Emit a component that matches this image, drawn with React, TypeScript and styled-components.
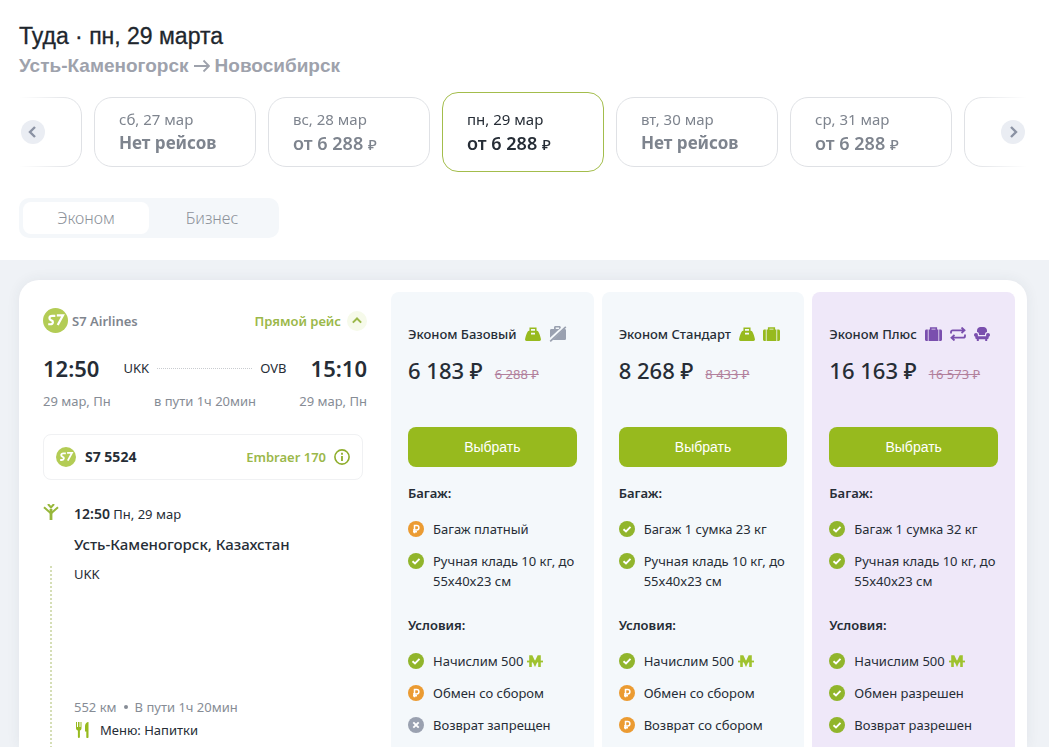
import React, { useState } from "react";
import styled, { createGlobalStyle, css } from "styled-components";

const green = "#97ba1e";
const greenText = "#9bb84a";
const dark = "#262d36";
const muted = "#868c95";
const violet = "#7a4fae";
const orange = "#eb9b32";
const grey = "#9aa1b0";

const GlobalStyle = createGlobalStyle`
  *, *::before, *::after { box-sizing: border-box; }
  body {
    margin: 0;
    background: #eff2f6;
    color: ${dark};
    font-family: "Noto Sans", "Open Sans", sans-serif;
    font-size: 13px;
    line-height: 20px;
  }
  h1, h2, h3, p, ul { margin: 0; padding: 0; font-size: inherit; font-weight: inherit; }
  ul { list-style: none; }
  button { margin: 0; padding: 0; border: 0; background: none; font: inherit; color: inherit; cursor: pointer; }
  svg { display: block; flex: none; }
`;

const Page = styled.div`
  display: flex;
  flex-direction: column;
  min-height: 100vh;
`;

const Top = styled.header`
  padding: 20px 22px 22px 19px;
  background: #fff;
`;

const Title = styled.h1`
  font-family: "Liberation Sans", Arial, sans-serif;
  font-size: 23px;
  line-height: 32px;
  color: #20262d;
  -webkit-text-stroke: 0.3px currentColor;
`;

const Route = styled.p`
  display: flex;
  align-items: center;
  gap: 5px;
  font-family: "Liberation Sans", Arial, sans-serif;
  font-size: 19px;
  font-weight: 700;
  line-height: 28px;
  color: #9ea2ac;
`;

const Dates = styled.nav`
  position: relative;
  margin-top: 12px;
`;

const Strip = styled.div`
  display: flex;
  align-items: center;
  justify-content: center;
  gap: 12px;
  overflow: hidden;
  mask-image: linear-gradient(90deg, transparent, #000 56px, #000 calc(100% - 56px), transparent);
`;

const DateCard = styled.button<{ $active?: boolean }>`
  flex: none;
  width: 162px;
  height: 70px;
  padding: 0 24px;
  border: 1px solid #dfe1e5;
  border-radius: 18px;
  background: #fff;
  text-align: left;
  color: #7e848e;
  ${(p) =>
    p.$active &&
    css`
      height: 80px;
      border-color: #a3bd4c;
      border-radius: 16px;
      color: ${dark};
    `}
`;

const DateLabel = styled.span`
  display: block;
  font-size: 15px;
  line-height: 22px;
`;

const DatePrice = styled.span<{ $none?: boolean }>`
  display: block;
  font-size: ${(p) => (p.$none ? "17px" : "18px")};
  font-weight: ${(p) => (p.$none ? 700 : 600)};
  line-height: 26px;
  white-space: nowrap;
`;

const SmallRuble = styled.span`
  font-size: 15px;
  font-weight: 500;
`;

const Arrow = styled.button<{ $side: "left" | "right" }>`
  position: absolute;
  top: 28px;
  ${(p) => p.$side}: 2px;
  display: grid;
  place-items: center;
  width: 24px;
  height: 24px;
  border-radius: 50%;
  background: #eaedf3;
  color: #8b92a3;
`;

const Tabs = styled.div`
  display: inline-flex;
  margin-top: 26px;
  padding: 4px;
  border-radius: 10px;
  background: #f4f7fa;
  vertical-align: top;
`;

const Tab = styled.button<{ $active: boolean }>`
  width: 126px;
  height: 32px;
  border-radius: 8px;
  background: ${(p) => (p.$active ? "#fff" : "transparent")};
  color: #8d929a;
  font-size: 16px;
  font-weight: 300;
`;

const Main = styled.main`
  display: flex;
  flex: 1;
  padding: 20px 22px 0 19px;
`;

const Card = styled.article`
  display: grid;
  grid-template-columns: minmax(0, 360fr) minmax(0, 624fr);
  flex: 1;
  gap: 12px;
  padding: 12px 12px 0 0;
  border-radius: 20px 20px 0 0;
  background: #fff;
  box-shadow: 0 0 14px rgba(40, 50, 70, 0.07);
`;

const Flight = styled.section`
  display: flex;
  flex-direction: column;
  padding: 16px 12px 0 24px;
`;

const Between = styled.div`
  display: flex;
  align-items: center;
  justify-content: space-between;
`;

const Airline = styled.div`
  display: flex;
  align-items: center;
  gap: 4px;
  color: #7f858e;
  font-weight: 600;
`;

const DirectButton = styled.button`
  display: flex;
  align-items: center;
  gap: 6px;
  color: ${greenText};
  font-weight: 600;
`;

const Chevron = styled.span`
  display: grid;
  place-items: center;
  width: 20px;
  height: 20px;
  border-radius: 50%;
  background: #f6faea;
`;

const Times = styled(Between)`
  margin-top: 17px;
  line-height: 36px;
`;

const Time = styled.strong`
  font-size: 22px;
  font-weight: 600;
`;

const Leg = styled.div`
  display: flex;
  align-items: center;
  flex: 1;
  gap: 8px;
  margin: 0 24px;
`;

const LegLine = styled.span`
  flex: 1;
  border-top: 1px dotted #c9ccd0;
`;

const Info = styled(Between)`
  margin-top: 5px;
  color: ${muted};
`;

const FlightBox = styled(Between)`
  height: 46px;
  margin: 23px 4px 0 0;
  padding: 0 12px;
  border: 1px solid #f0f1f3;
  border-radius: 8px;
`;

const FlightNumber = styled.div`
  display: flex;
  align-items: center;
  gap: 9px;
  font-size: 14px;
  font-weight: 700;
`;

const PlaneButton = styled.button`
  display: flex;
  align-items: center;
  gap: 8px;
  color: ${greenText};
  font-weight: 600;
`;

const Segment = styled.div`
  display: grid;
  grid-template-columns: 16px 1fr;
  column-gap: 15px;
  flex: 1;
  margin-top: 24px;
`;

const Rail = styled.div`
  display: flex;
  flex-direction: column;
  align-items: center;
  gap: 46px;
`;

const RailDots = styled.span`
  flex: 1;
  width: 2px;
  background: repeating-linear-gradient(180deg, #d5deb6 0 2px, transparent 2px 4px);
`;

const Stop = styled.div`
  display: flex;
  flex-direction: column;
`;

const StopTime = styled.p`
  line-height: 20px;

  strong {
    font-size: 14px;
    font-weight: 600;
  }
`;

const City = styled.h2`
  margin-top: 10px;
  font-size: 15px;
  font-weight: 500;
`;

const Code = styled.p`
  margin-top: 10px;
`;

const Distance = styled.p`
  display: flex;
  align-items: center;
  gap: 7px;
  margin-top: 113px;
  color: ${muted};
`;

const Bullet = styled.span`
  width: 4px;
  height: 4px;
  border-radius: 50%;
  background: ${muted};
`;

const Meal = styled.p`
  display: flex;
  align-items: center;
  gap: 10px;
  margin-top: 3px;
`;

const Fares = styled.div`
  display: grid;
  grid-template-columns: repeat(3, minmax(0, 1fr));
  gap: 8px;
`;

const Fare = styled.section<{ $plus?: boolean }>`
  padding: 32px 17px 12px;
  border-radius: 8px 8px 0 0;
  background: ${(p) => (p.$plus ? "#efe8f9" : "#f4f8fb")};
`;

const FareName = styled.div`
  display: flex;
  align-items: center;
  gap: 8px;
  font-weight: 500;
  white-space: nowrap;
`;

const FareIcons = styled.span`
  display: flex;
  align-items: center;
  gap: 8px;
`;

const Prices = styled.p`
  display: flex;
  align-items: baseline;
  gap: 12px;
  height: 32px;
  margin-top: 10px;
  line-height: 32px;
  white-space: nowrap;
`;

const Price = styled.strong`
  font-size: 22px;
  font-weight: 500;
`;

const OldPrice = styled.s`
  color: #b2809c;
`;

const Choose = styled.button`
  display: block;
  width: 100%;
  height: 40px;
  margin: 41px 0 16px;
  border-radius: 8px;
  background: ${green};
  color: #fff;
  font-family: "Liberation Sans", Arial, sans-serif;
  font-size: 14px;
`;

const ListTitle = styled.h3`
  font-weight: 600;

  ul + & {
    margin-top: 24px;
  }
`;

const Terms = styled.ul`
  display: flex;
  flex-direction: column;
  gap: 12px;
  margin-top: 16px;
`;

const Term = styled.li`
  display: flex;
  gap: 9px;

  > svg {
    margin-top: 2px;
  }
`;

const Miles = styled.span`
  display: inline-flex;
  margin-left: 4px;
  vertical-align: -1px;
`;

const S7Logo = ({ size }: { size: number }) => (
  <svg width={size} height={size} viewBox="0 0 26 26" aria-label="S7" role="img">
    <circle cx="13" cy="13" r="13" fill="#b3cc55" />
    <path
      d="M12.8 8.2H9.6c-1.8 0-2.8.8-2.9 2.2-.1 1.2.6 1.9 2 2.5 1.3.5 1.8 1 1.6 2-.2 1.3-1.2 2-2.7 2H5.4M14.4 7.7h6.4l-5.5 10"
      fill="none"
      stroke="#fff"
      strokeWidth="2.3"
    />
  </svg>
);

const ChevronIcon = ({ d, size = 24 }: { d: string; size?: number }) => (
  <svg width={size} height={size} viewBox="0 0 24 24" fill="none" stroke="currentColor" strokeWidth="2.4">
    <path d={d} />
  </svg>
);

const RouteArrow = () => (
  <svg width="16" height="16" viewBox="0 0 16 16" fill="none" stroke="currentColor" strokeWidth="1.8">
    <path d="M0 8h14.5M9.5 2.5 15 8l-5.500 5.500" />
  </svg>
);

const InfoIcon = () => (
  <svg width="16" height="16" viewBox="0 0 16 16" fill="none" stroke="#8fae2c" strokeWidth="1.6">
    <circle cx="8" cy="8" r="7.100" />
    <path d="M8 3.800v1.900M8 7v5" strokeWidth="1.800" />
  </svg>
);

const TakeoffIcon = () => (
  <svg width="16" height="16" viewBox="0 0 16 16" fill="none" stroke="#97b73a" strokeWidth="2">
    <path d="M8 5v11" strokeWidth="2.800" />
    <path d="M1 3.200 8 9.500l7-6.300M5 0l3 3.500L11 0" />
  </svg>
);

const MealIcon = () => (
  <svg width="16" height="16" viewBox="0 0 16 16" fill={green}>
    <path d="M2 0h1v5h1V0h1.500v5h1V0h1v6.200c0 1.300-.7 2-1.600 2.300V15a1 1 0 0 1-2 0V8.500C2.800 8.200 2 7.500 2 6.200zM14.500 0v15a1 1 0 0 1-2.200 0V9.500H11V4c0-2.300 1.500-4 3.500-4z" />
  </svg>
);

const BagIcon = () => (
  <svg width="16" height="14" viewBox="0 0 16 14" fill={green}>
    <path d="M5.200 4.500V1.200h5.600v3.300" fill="none" stroke={green} strokeWidth="1.500" />
    <path
      fillRule="evenodd"
      d="M4.200 3.800h7.600c.7 0 1.200.3 1.600.9 1 1.700 2 4.400 2.500 7.400.2 1.200-.3 1.900-1.400 1.900h-13C.4 14-.1 13.300.1 12.100.6 9.100 1.600 6.400 2.600 4.700c.4-.6.9-.9 1.600-.9zm1.800 2v1.600h4V5.800z"
    />
  </svg>
);

const NoCaseIcon = () => (
  <svg width="18" height="16" viewBox="0 0 18 16" fill={grey}>
    <path d="M1 4.500C1 3.700 1.500 3 2.300 3H5V1.500C5 .7 5.600 0 6.400 0h4c.9 0 1.400.7 1.400 1.500V2l-1.700 1.400V1.600H6.700V3h3.800L1 11.800zM15.200 3h.6c.8 0 1.200.7 1.200 1.500v8c0 .9-.4 1.500-1.200 1.500H3.500z" />
    <path d="M1.200 15.300 16.800.8" stroke={grey} strokeWidth="1.700" />
  </svg>
);

const CaseIcon = ({ color }: { color: string }) => (
  <svg width="17" height="14" viewBox="0 0 17 14" fill={color}>
    <path d="M5.700 3V1h5.600v2" fill="none" stroke={color} strokeWidth="1.600" />
    <path d="M3.600 2.500h9.800V14H3.600zM2.800 2.500V14H1.500C.6 14 0 13.400 0 12.500V4c0-.9.6-1.500 1.500-1.500zM14.200 2.500V14h1.300c.9 0 1.500-.6 1.500-1.500V4c0-.9-.6-1.500-1.500-1.500z" />
  </svg>
);

const SwapIcon = () => (
  <svg width="16" height="14" viewBox="0 0 16 14" fill="none" stroke={violet} strokeWidth="1.800">
    <path d="M1 6.500V5c0-1 .6-1.700 1.700-1.700H14M15 7.500V9c0 1-.6 1.700-1.700 1.700H2M11.500.5l3 2.800-3 2.700M4.500 8l-3 2.700 3 2.800" />
  </svg>
);

const SeatIcon = () => (
  <svg width="16" height="14" viewBox="0 0 16 14" fill={violet}>
    <path d="M3 5V3.500C3 1.300 4.700 0 6.500 0h3C11.300 0 13 1.300 13 3.500V5c-1.300.3-2 1.200-2 2.500V8H5v-.5C5 6.200 4.300 5.300 3 5z" />
    <path d="M2 6c1.200 0 1.900.8 1.900 1.900v1.300h8.200V7.900C12.100 6.800 12.800 6 14 6s2 .8 2 1.900c0 .9-.5 1.500-1.300 1.800v.8c0 .9-.6 1.600-1.500 1.700V14h-2v-1.800H4.800V14h-2v-1.800c-.9-.1-1.500-.8-1.500-1.700v-.8C.5 9.400 0 8.800 0 7.900 0 6.800.8 6 2 6z" />
  </svg>
);

const MilesIcon = () => (
  <svg width="16" height="12" viewBox="0 0 16 12" fill="none" stroke="#9fc22f" strokeWidth="2.600">
    <path d="M3.500 12V1.500h1L8 9l3.500-7.500h1V12" />
    <path d="M0 6.500h16" strokeWidth="1.800" />
  </svg>
);

type Status = "yes" | "paid" | "no";

const statusColor: Record<Status, string> = { yes: "#91b52c", paid: orange, no: grey };
const statusPath: Record<Status, string> = {
  yes: "M4.500 8.200 7 10.500l4.500-4.600",
  paid: "M6.500 12.200V4.500h2.200a2.200 2.200 0 0 1 0 4.400H5M5 10.700h4",
  no: "m5.300 5.300 5.400 5.400M10.700 5.300l-5.400 5.400",
};

const StatusIcon = ({ status }: { status: Status }) => (
  <svg width="16" height="16" viewBox="0 0 16 16" fill="none" stroke="#fff" strokeWidth={status === "paid" ? 1.5 : 1.9}>
    <circle cx="8" cy="8" r="8" fill={statusColor[status]} stroke="none" />
    <path d={statusPath[status]} />
  </svg>
);

const days: { label: string; price?: string }[] = [
  { label: "" },
  { label: "сб, 27 мар" },
  { label: "вс, 28 мар", price: "6 288" },
  { label: "пн, 29 мар", price: "6 288" },
  { label: "вт, 30 мар" },
  { label: "ср, 31 мар", price: "6 288" },
  { label: "" },
];

interface FareData {
  name: string;
  price: string;
  old: string;
  icons: React.ReactNode;
  baggage: [Status, string];
  exchange: [Status, string];
  refund: [Status, string];
  plus?: boolean;
}

const fares: FareData[] = [
  {
    name: "Эконом Базовый",
    price: "6 183 ₽",
    old: "6 288 ₽",
    icons: (
      <>
        <BagIcon />
        <NoCaseIcon />
      </>
    ),
    baggage: ["paid", "Багаж платный"],
    exchange: ["paid", "Обмен со сбором"],
    refund: ["no", "Возврат запрещен"],
  },
  {
    name: "Эконом Стандарт",
    price: "8 268 ₽",
    old: "8 433 ₽",
    icons: (
      <>
        <BagIcon />
        <CaseIcon color={green} />
      </>
    ),
    baggage: ["yes", "Багаж 1 сумка 23 кг"],
    exchange: ["paid", "Обмен со сбором"],
    refund: ["paid", "Возврат со сбором"],
  },
  {
    name: "Эконом Плюс",
    price: "16 163 ₽",
    old: "16 573 ₽",
    icons: (
      <>
        <CaseIcon color={violet} />
        <SwapIcon />
        <SeatIcon />
      </>
    ),
    baggage: ["yes", "Багаж 1 сумка 32 кг"],
    exchange: ["yes", "Обмен разрешен"],
    refund: ["yes", "Возврат разрешен"],
    plus: true,
  },
];

const TermRow = ({ status, children }: { status: Status; children: React.ReactNode }) => (
  <Term>
    <StatusIcon status={status} />
    <span>{children}</span>
  </Term>
);

export default function App() {
  const [cabin, setCabin] = useState("Эконом");
  const [day, setDay] = useState(3);

  return (
    <Page>
      <GlobalStyle />
      <Top>
        <Title>Туда · пн, 29 марта</Title>
        <Route>
          Усть-Каменогорск <RouteArrow /> Новосибирск
        </Route>
        <Dates aria-label="Даты">
          <Strip>
            {days.map((d, i) => (
              <DateCard key={i} $active={i === day} disabled={!d.label} onClick={() => setDay(i)}>
                {d.label && (
                  <>
                    <DateLabel>{d.label}</DateLabel>
                    <DatePrice $none={!d.price}>
                      {d.price ? (
                        <>
                          от {d.price} <SmallRuble>₽</SmallRuble>
                        </>
                      ) : (
                        "Нет рейсов"
                      )}
                    </DatePrice>
                  </>
                )}
              </DateCard>
            ))}
          </Strip>
          <Arrow $side="left" aria-label="Назад">
            <ChevronIcon d="m14 7-5 5 5 5" />
          </Arrow>
          <Arrow $side="right" aria-label="Вперёд">
            <ChevronIcon d="m10 7 5 5-5 5" />
          </Arrow>
        </Dates>
        <Tabs role="tablist">
          {["Эконом", "Бизнес"].map((name) => (
            <Tab key={name} role="tab" aria-selected={cabin === name} $active={cabin === name} onClick={() => setCabin(name)}>
              {name}
            </Tab>
          ))}
        </Tabs>
      </Top>
      <Main>
        <Card>
          <Flight>
            <Between>
              <Airline>
                <S7Logo size={25} />
                S7 Airlines
              </Airline>
              <DirectButton>
                Прямой рейс
                <Chevron>
                  <ChevronIcon size={20} d="m7 14 5-5 5 5" />
                </Chevron>
              </DirectButton>
            </Between>
            <Times>
              <Time>12:50</Time>
              <Leg>
                UKK
                <LegLine />
                OVB
              </Leg>
              <Time>15:10</Time>
            </Times>
            <Info>
              <span>29 мар, Пн</span>
              <span>в пути 1ч 20мин</span>
              <span>29 мар, Пн</span>
            </Info>
            <FlightBox>
              <FlightNumber>
                <S7Logo size={20} />
                S7 5524
              </FlightNumber>
              <PlaneButton>
                Embraer 170
                <InfoIcon />
              </PlaneButton>
            </FlightBox>
            <Segment>
              <Rail>
                <TakeoffIcon />
                <RailDots />
              </Rail>
              <Stop>
                <StopTime>
                  <strong>12:50</strong> Пн, 29 мар
                </StopTime>
                <City>Усть-Каменогорск, Казахстан</City>
                <Code>UKK</Code>
                <Distance>
                  552 км <Bullet /> В пути 1ч 20мин
                </Distance>
                <Meal>
                  <MealIcon />
                  Меню: Напитки
                </Meal>
              </Stop>
            </Segment>
          </Flight>
          <Fares>
            {fares.map((f) => (
              <Fare key={f.name} $plus={f.plus}>
                <FareName>
                  {f.name}
                  <FareIcons>{f.icons}</FareIcons>
                </FareName>
                <Prices>
                  <Price>{f.price}</Price>
                  <OldPrice>{f.old}</OldPrice>
                </Prices>
                <Choose>Выбрать</Choose>
                <ListTitle>Багаж:</ListTitle>
                <Terms>
                  <TermRow status={f.baggage[0]}>{f.baggage[1]}</TermRow>
                  <TermRow status="yes">Ручная кладь 10 кг, до 55x40x23 см</TermRow>
                </Terms>
                <ListTitle>Условия:</ListTitle>
                <Terms>
                  <TermRow status="yes">
                    Начислим 500
                    <Miles>
                      <MilesIcon />
                    </Miles>
                  </TermRow>
                  <TermRow status={f.exchange[0]}>{f.exchange[1]}</TermRow>
                  <TermRow status={f.refund[0]}>{f.refund[1]}</TermRow>
                </Terms>
              </Fare>
            ))}
          </Fares>
        </Card>
      </Main>
    </Page>
  );
}
